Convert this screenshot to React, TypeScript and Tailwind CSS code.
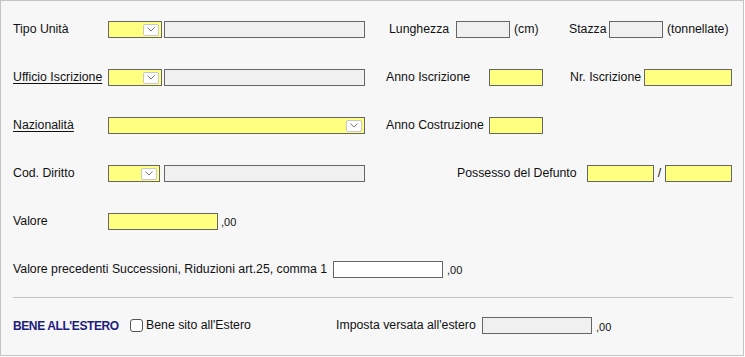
import React from 'react';

const Caret = () => (
  <span className="absolute right-[2px] top-[2px] flex h-[12px] w-[16px] items-center justify-center rounded-[2px] border border-[#c8c8c8] bg-white">
    <svg width="8" height="5" viewBox="0 0 8 5" fill="none">
      <path d="M0.5 0.5 L4 4 L7.5 0.5" stroke="#777" strokeWidth="1" />
    </svg>
  </span>
);

const Select = ({ w }: { w: string }) => (
  <div className={`relative h-[17px] ${w} border border-[#666] bg-[#ffff80]`}>
    <Caret />
  </div>
);

const Box = ({ w, bg }: { w: string; bg: string }) => (
  <div className={`h-[17px] ${w} border border-[#666] ${bg}`} />
);

const App = () => {
  return (
    <div className="h-[357px] w-[745px] bg-white">
      <div
        className="h-[356px] w-[744px] border border-[#c4c4c4] bg-[#f7f7f7] pt-[4px] text-[12.3px] text-[#111]"
        style={{ fontFamily: '"Liberation Sans", Arial, sans-serif' }}
      >
        {/* Tipo Unità */}
        <div className="flex h-12 items-center pl-[12px]">
          <span className="w-[95px]">Tipo Unità</span>
          <Select w="w-[54px]" />
          <div className="ml-[2px]">
            <Box w="w-[201px]" bg="bg-[#f0f0f0]" />
          </div>
          <span className="ml-[24px] w-[67px]">Lunghezza</span>
          <Box w="w-[54px]" bg="bg-[#f0f0f0]" />
          <span className="ml-[4px] w-[55px]">(cm)</span>
          <span className="w-[40px]">Stazza</span>
          <Box w="w-[54px]" bg="bg-[#f0f0f0]" />
          <span className="ml-[4px]">(tonnellate)</span>
        </div>

        {/* Ufficio Iscrizione */}
        <div className="flex h-12 items-center pl-[12px]">
          <span className="w-[95px]">
            <span className="underline underline-offset-2">Ufficio Iscrizione</span>
          </span>
          <Select w="w-[54px]" />
          <div className="ml-[2px]">
            <Box w="w-[201px]" bg="bg-[#f0f0f0]" />
          </div>
          <span className="ml-[21px] w-[103px]">Anno Iscrizione</span>
          <Box w="w-[54px]" bg="bg-[#ffff80]" />
          <span className="ml-[27px] w-[74px]">Nr. Iscrizione</span>
          <Box w="w-[88px]" bg="bg-[#ffff80]" />
        </div>

        {/* Nazionalità */}
        <div className="flex h-12 items-center pl-[12px]">
          <span className="w-[95px]">
            <span className="underline underline-offset-2">Nazionalità</span>
          </span>
          <Select w="w-[257px]" />
          <span className="ml-[21px] w-[103px]">Anno Costruzione</span>
          <Box w="w-[54px]" bg="bg-[#ffff80]" />
        </div>

        {/* Cod. Diritto */}
        <div className="flex h-12 items-center pl-[12px]">
          <span className="w-[95px]">Cod. Diritto</span>
          <Select w="w-[52px]" />
          <div className="ml-[4px]">
            <Box w="w-[201px]" bg="bg-[#f0f0f0]" />
          </div>
          <span className="ml-[92px] w-[130px]">Possesso del Defunto</span>
          <Box w="w-[67px]" bg="bg-[#ffff80]" />
          <span className="w-[11px] text-center">/</span>
          <Box w="w-[67px]" bg="bg-[#ffff80]" />
        </div>

        {/* Valore */}
        <div className="flex h-12 items-center pl-[12px]">
          <span className="w-[95px]">Valore</span>
          <Box w="w-[110px]" bg="bg-[#ffff80]" />
          <span className="ml-[3px] pt-[3px] text-[11px]">,00</span>
        </div>

        {/* Valore precedenti */}
        <div className="flex h-12 items-center pl-[12px]">
          <span className="w-[320px] whitespace-nowrap">
            Valore precedenti Successioni, Riduzioni art.25, comma 1
          </span>
          <Box w="w-[110px]" bg="bg-white" />
          <span className="ml-[4px] pt-[3px] text-[11px]">,00</span>
        </div>

        <div className="ml-[12px] mt-[4px] w-[720px] border-t border-[#c4c4c4]" />

        {/* Bene all'estero */}
        <div className="flex h-[55px] items-center pl-[12px]">
          <span className="w-[117px] text-[12px] font-bold tracking-[-0.4px] text-[#1c1c80]">
            BENE ALL'ESTERO
          </span>
          <span className="flex w-[206px] items-center">
            <span className="h-[13px] w-[13px] rounded-[3px] border border-[#555] bg-white" />
            <span className="ml-[3px]">Bene sito all'Estero</span>
          </span>
          <span className="w-[146px]">Imposta versata all'estero</span>
          <Box w="w-[110px]" bg="bg-[#f0f0f0]" />
          <span className="ml-[4px] pt-[3px] text-[11px]">,00</span>
        </div>
      </div>
    </div>
  );
};

export default App;
